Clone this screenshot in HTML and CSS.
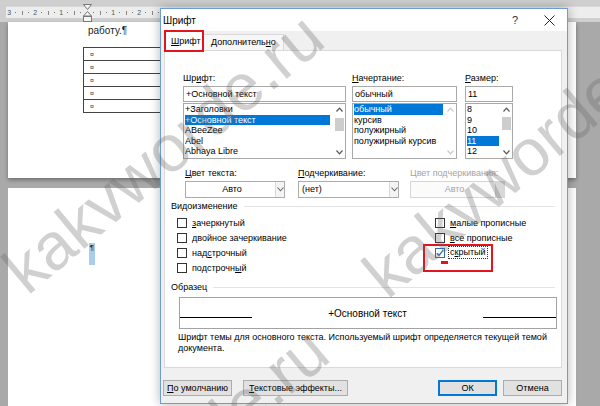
FILE: index.html
```html
<!DOCTYPE html>
<html lang="ru">
<head>
  <meta charset="UTF-8" />
  <title>Шрифт</title>
  <link rel="stylesheet" href="styles.css">
</head>
<body>
  <div class="screen">
    <div class="word">
      <div class="ruler">
        <div class="ruler-strip">
          <span class="rc">3</span><span class="rc dot"></span><span class="rc tick"></span><span class="rc dot"></span>
          <span class="rc">2</span><span class="rc dot"></span><span class="rc tick"></span><span class="rc dot"></span>
          <span class="rc">1</span><span class="rc dot"></span><span class="rc tick"></span><span class="rc dot"></span>
          <span class="rc indent">
            <svg width="9" height="18" viewBox="0 0 9 18"><path d="M0.5 0.5h8L4.5 5.5z M4.5 7.5l4 4.5h-8z" fill="#f6f6f6" stroke="#777"/><rect x="0.5" y="12.5" width="8" height="5" fill="#f6f6f6" stroke="#777"/></svg>
          </span>
          <span class="rc dot"></span><span class="rc tick"></span><span class="rc dot"></span>
          <span class="rc">1</span><span class="rc dot"></span><span class="rc tick"></span><span class="rc dot"></span>
          <span class="rc">2</span><span class="rc dot"></span><span class="rc tick"></span><span class="rc dot"></span>
          <span class="rc">3</span>
        </div>
      </div>

      <div class="page page-top">
        <p class="para">работу.¶</p>
        <table class="tbl">
          <tr><td>¤</td></tr>
          <tr><td>¤</td></tr>
          <tr><td>¤</td></tr>
          <tr><td>¤</td></tr>
          <tr><td>¤</td></tr>
        </table>
      </div>
      <div class="page page-bottom">
        <span class="caret-sel">¶</span>
      </div>
    </div>

    <div class="dialog">
      <div class="titlebar">
        <span class="title">Шрифт</span>
        <span class="help">?</span>
        <svg class="close" width="11" height="11" viewBox="0 0 11 11"><path d="M0.5 0.5L10.5 10.5M10.5 0.5L0.5 10.5" stroke="#222" stroke-width="1"/></svg>
      </div>

      <div class="tabs">
        <div class="tab tab-active"><u>Ш</u>рифт</div>
        <div class="tab">Дополнитель<u>н</u>о</div>
      </div>

      <div class="panel">
        <div class="font-row">
          <div class="col col-font">
            <div class="lbl">Шр<u>и</u>фт:</div>
            <div class="field">+Основной текст</div>
            <div class="list">
              <div class="items">
                <div class="item">+Заголовки</div>
                <div class="item sel">+Основной текст</div>
                <div class="item">ABeeZee</div>
                <div class="item">Abel</div>
                <div class="item">Abhaya Libre</div>
              </div>
              <div class="sbar">
                <div class="sarrow"><svg width="7" height="5" viewBox="0 0 7 5"><path d="M0.5 4.5L3.5 1.2L6.5 4.5" fill="none" stroke="#555" stroke-width="1.2"/></svg></div>
                <div class="strack"><div class="thumb"></div></div>
                <div class="sarrow"><svg width="7" height="5" viewBox="0 0 7 5"><path d="M0.5 0.5L3.5 3.8L6.5 0.5" fill="none" stroke="#555" stroke-width="1.2"/></svg></div>
              </div>
            </div>
          </div>

          <div class="col col-style">
            <div class="lbl"><u>Н</u>ачертание:</div>
            <div class="field">обычный</div>
            <div class="list">
              <div class="items">
                <div class="item sel">обычный</div>
                <div class="item">курсив</div>
                <div class="item">полужирный</div>
                <div class="item">полужирный курсив</div>
              </div>
              <div class="sbar">
                <div class="sarrow"><svg width="7" height="5" viewBox="0 0 7 5"><path d="M0.5 4.5L3.5 1.2L6.5 4.5" fill="none" stroke="#c8c8c8" stroke-width="1.2"/></svg></div>
                <div class="strack"></div>
                <div class="sarrow"><svg width="7" height="5" viewBox="0 0 7 5"><path d="M0.5 0.5L3.5 3.8L6.5 0.5" fill="none" stroke="#c8c8c8" stroke-width="1.2"/></svg></div>
              </div>
            </div>
          </div>

          <div class="col col-size">
            <div class="lbl"><u>Р</u>азмер:</div>
            <div class="field">11</div>
            <div class="list">
              <div class="items">
                <div class="item">8</div>
                <div class="item">9</div>
                <div class="item">10</div>
                <div class="item sel">11</div>
                <div class="item">12</div>
              </div>
              <div class="sbar">
                <div class="sarrow"><svg width="7" height="5" viewBox="0 0 7 5"><path d="M0.5 4.5L3.5 1.2L6.5 4.5" fill="none" stroke="#555" stroke-width="1.2"/></svg></div>
                <div class="strack"><div class="thumb"></div></div>
                <div class="sarrow"><svg width="7" height="5" viewBox="0 0 7 5"><path d="M0.5 0.5L3.5 3.8L6.5 0.5" fill="none" stroke="#555" stroke-width="1.2"/></svg></div>
              </div>
            </div>
          </div>
        </div>

        <div class="color-row">
          <div class="ccol ccol-1">
            <div class="lbl"><u>Ц</u>вет текста:</div>
            <div class="combo">
              <span class="combo-text centered">Авто</span>
              <span class="combo-btn"><svg width="7" height="5" viewBox="0 0 7 5"><path d="M0.5 0.5L3.5 3.8L6.5 0.5" fill="none" stroke="#666" stroke-width="1.1"/></svg></span>
            </div>
          </div>
          <div class="ccol ccol-2">
            <div class="lbl"><u>П</u>одчеркивание:</div>
            <div class="combo">
              <span class="combo-text">(нет)</span>
              <span class="combo-btn"><svg width="7" height="5" viewBox="0 0 7 5"><path d="M0.5 0.5L3.5 3.8L6.5 0.5" fill="none" stroke="#666" stroke-width="1.1"/></svg></span>
            </div>
          </div>
          <div class="ccol ccol-3">
            <div class="lbl disabled">Цвет подчеркивания:</div>
            <div class="combo combo-off">
              <span class="combo-text centered">Авто</span>
              <span class="combo-btn"></span>
            </div>
          </div>
        </div>

        <div class="group-head">Видоизменение</div>
        <div class="checks">
          <div class="chk-col">
            <div class="chk"><span class="box"></span><span><u>з</u>ачеркнутый</span></div>
            <div class="chk"><span class="box"></span><span><u>д</u>войное зачеркивание</span></div>
            <div class="chk"><span class="box"></span><span>над<u>с</u>трочный</span></div>
            <div class="chk"><span class="box"></span><span>подстрочн<u>ы</u>й</span></div>
          </div>
          <div class="chk-col">
            <div class="chk"><span class="box"></span><span><u>м</u>алые прописные</span></div>
            <div class="chk"><span class="box"></span><span><u>в</u>се прописные</span></div>
            <div class="chk"><span class="box checked"><svg width="8" height="8" viewBox="0 0 8 8"><path d="M0.8 4.2L3 6.4L7.2 1.2" fill="none" stroke="#2b6cb8" stroke-width="1.3"/></svg></span><span class="focus">с<u>к</u>рытый</span></div>
          </div>
          <div class="mark-box"></div>
          <div class="mark-dash"></div>
        </div>

        <div class="group-head head-sample">Образец</div>
        <div class="sample">
          <span class="ln ln-left"></span>
          <span class="sample-text">+Основной текст</span>
          <span class="ln ln-right"></span>
        </div>
        <p class="desc">Шрифт темы для основного текста. Используемый шрифт определяется текущей темой документа.</p>
      </div>

      <div class="footer">
        <div class="btn-group">
          <div class="btn btn-default"><u>П</u>о умолчанию</div>
          <div class="btn btn-effects"><u>Т</u>екстовые эффекты...</div>
        </div>
        <div class="btn-group right">
          <div class="btn btn-ok">ОК</div>
          <div class="btn btn-cancel">Отмена</div>
        </div>
      </div>
    </div>

    <div class="wm wm1">kakvworde.ru</div>
    <div class="wm wm2">kakvworde.ru</div>
    <div class="wm wm3">kakvworde.ru</div>
  </div>
</body>
</html>
```

FILE: styles.css
```css
* {
  box-sizing: border-box;
}

body {
  margin: 0;
  font-family: "Liberation Sans", Arial, sans-serif;
}

.screen {
  position: relative;
  width: 600px;
  height: 406px;
  overflow: hidden;
  background: #a9a9a9;
}

/* word document behind the dialog */
.ruler {
  height: 22px;
  background: #cfcfcf;
  padding: 6px 0 0 6px;
}

.ruler-strip {
  height: 12px;
  background: #ededed;
  border-top: 1px solid #d8d8d8;
  display: flex;
  align-items: center;
  font-size: 7px;
  color: #555;
}

.rc {
  width: 6.5px;
  flex: none;
  display: flex;
  justify-content: center;
  align-items: center;
  height: 100%;
}

.rc.dot::after {
  content: "";
  width: 1px;
  height: 1px;
  background: #777;
}

.rc.tick::after {
  content: "";
  width: 1px;
  height: 4px;
  background: #888;
}

.rc.indent {
  position: relative;
}

.rc.indent svg {
  position: absolute;
  left: -1px;
  top: -3px;
}

.page {
  background: #fff;
  width: 568px;
  margin-left: 8px;
}

.page-top {
  height: 156px;
  padding: 3px 0 0 75px;
  margin-bottom: 10px;
  box-shadow: 0 2px 4px rgba(0, 0, 0, 0.35);
}

.para {
  margin: 0 0 10px 5px;
  font-size: 10px;
  line-height: 12px;
  color: #222;
}

.tbl {
  border-collapse: collapse;
  width: 220px;
}

.tbl td {
  height: 13px;
  border: 1px solid #444;
  padding: 0 0 0 6px;
  font-size: 7px;
  line-height: 11px;
  color: #333;
}

.page-bottom {
  height: 230px;
  padding: 55px 0 0 81px;
}

.caret-sel {
  display: block;
  width: 6px;
  height: 22px;
  background: #a9cdef;
  font-size: 8px;
  line-height: 9px;
  color: #223;
  text-align: center;
}

/* font dialog */
.dialog {
  position: absolute;
  left: 160px;
  top: 8px;
  width: 408px;
  height: 396px;
  background: #f0f0f0;
  border: 1px solid #6d9bd3;
  box-shadow: 0 0 10px rgba(0, 0, 0, 0.3);
  font-size: 9px;
  color: #000;
}

.titlebar {
  height: 22px;
  background: #fff;
  display: flex;
  align-items: center;
  padding-left: 2px;
}

.title {
  font-size: 10px;
}

.help {
  margin-left: auto;
  font-size: 11px;
  color: #333;
}

.close {
  margin: 0 12px 0 26px;
}

.tabs {
  height: 19px;
  display: flex;
  align-items: flex-end;
  padding-left: 4px;
}

.tab {
  height: 16px;
  border: 1px solid #d9d9d9;
  border-bottom: none;
  background: #f7f7f7;
  padding: 0 7px;
  line-height: 15px;
}

.tab-active {
  height: 20px;
  width: 38px;
  margin-bottom: -1px;
  background: #fff;
  position: relative;
  z-index: 1;
  padding: 2px 0 0 5px;
  outline: 2px solid #e2141c;
  outline-offset: -1px;
}

.panel {
  margin-left: 3px;
  width: 398px;
  height: 318px;
  background: #fff;
  border: 1px solid #d9d9d9;
  padding: 21px 6px 0 6px;
}

.lbl {
  height: 12px;
  line-height: 12px;
  margin-bottom: 2px;
  white-space: nowrap;
}

.lbl.disabled {
  color: #a3a3a3;
}

.font-row {
  display: flex;
  margin-left: 12px;
}

.col-font {
  width: 163px;
  margin-right: 6px;
}

.col-style {
  width: 105px;
  margin-right: 8px;
}

.col-size {
  width: 48px;
}

.field {
  height: 16px;
  border: 1px solid #a9a9a9;
  padding-left: 2px;
  line-height: 14px;
}

.list {
  margin-top: 1px;
  height: 56px;
  border: 1px solid #a9a9a9;
  display: flex;
}

.items {
  flex: 1;
  overflow: hidden;
}

.item {
  height: 10.5px;
  line-height: 10.5px;
  padding-left: 1px;
  white-space: nowrap;
}

.item.sel {
  background: #0078d7;
  color: #fff;
  margin: 0 1px 0 1px;
  padding-left: 0;
}

.col-font .item.sel {
  margin-right: 3px;
}

.sbar {
  width: 12px;
  display: flex;
  flex-direction: column;
}

.sarrow {
  height: 11px;
  display: flex;
  align-items: center;
  justify-content: center;
}

.strack {
  flex: 1;
}

.thumb {
  width: 9px;
  height: 13px;
  margin: 3px auto 0;
  background: #cdcdcd;
}

.col-size .thumb {
  margin-top: 2px;
}

.color-row {
  display: flex;
  margin: 8px 0 0 14px;
}

.ccol-1 {
  width: 100px;
  margin-right: 13px;
}

.ccol-2 {
  width: 101px;
  margin-right: 11px;
}

.ccol-3 {
  width: 95px;
}

.combo {
  height: 17px;
  border: 1px solid #acacac;
  background: #fff;
  display: flex;
}

.combo-text {
  flex: 1;
  line-height: 15px;
  padding-left: 3px;
}

.combo-text.centered {
  text-align: center;
}

.combo-btn {
  width: 9px;
  border-left: 1px solid #d9d9d9;
  background: #f4f4f4;
  display: flex;
  align-items: center;
  justify-content: center;
}

.combo-off {
  border-color: #d6d6d6;
  background: #fbfbfb;
  color: #a3a3a3;
}

.combo-off .combo-btn {
  background: #d8d8d8;
  border-left-color: #cfcfcf;
}

.group-head {
  margin-top: 2px;
  height: 12px;
  line-height: 12px;
  display: flex;
  align-items: center;
}

.group-head::after {
  content: "";
  flex: 1;
  height: 1px;
  background: #e3e3e3;
  margin-left: 6px;
}

.checks {
  position: relative;
  margin-top: 3px;
  padding-left: 6px;
  display: grid;
  grid-template-columns: 258px 1fr;
}

.chk {
  height: 15px;
  display: flex;
  align-items: center;
  white-space: nowrap;
}

.box {
  width: 10px;
  height: 10px;
  border: 1px solid #333;
  background: #fff;
  margin-right: 5px;
  flex: none;
  display: flex;
  align-items: center;
  justify-content: center;
}

.box.checked {
  border-color: #2b6cb8;
}

.focus {
  outline: 1px dotted #333;
  padding: 0 1px;
  line-height: 11px;
  margin-left: -1px;
}

.mark-box {
  position: absolute;
  left: 252px;
  top: 29px;
  width: 70px;
  height: 28px;
  border: 2px solid #e2141c;
}

.mark-dash {
  position: absolute;
  left: 270px;
  top: 46px;
  width: 7px;
  height: 3px;
  background: #e2141c;
}

.head-sample {
  margin-top: 6px;
}

.sample {
  margin: 4px 0 0 8px;
  width: 378px;
  height: 32px;
  border: 1px solid #a3a3a3;
  display: flex;
  align-items: center;
}

.ln {
  height: 1px;
  background: #000;
  margin-top: 8px;
}

.ln-left {
  width: 72px;
}

.ln-right {
  width: 73px;
}

.sample-text {
  flex: 1;
  text-align: center;
  font-size: 10px;
}

.desc {
  margin: 3px 0 0 7px;
  line-height: 11px;
  width: 378px;
}

.footer {
  display: flex;
  justify-content: space-between;
  padding: 12px 5px 0 2px;
}

.btn-group {
  display: flex;
  gap: 11px;
}

.btn-group.right {
  gap: 6px;
}

.btn {
  height: 16px;
  border: 1px solid #adadad;
  background: #e1e1e1;
  text-align: center;
  line-height: 14px;
  white-space: nowrap;
}

.btn-default {
  width: 69px;
}

.btn-effects {
  width: 105px;
}

.btn-ok,
.btn-cancel {
  width: 59px;
}

.btn-ok {
  border-color: #0078d7;
  box-shadow: inset 0 0 0 1px #0078d7;
}

/* site watermark */
.wm {
  position: absolute;
  font-size: 66px;
  line-height: 66px;
  white-space: nowrap;
  color: rgba(100, 100, 100, 0.3);
  transform: rotate(-40deg);
  transform-origin: 0 100%;
  pointer-events: none;
}

.wm1 {
  left: 34px;
  top: 238px;
}

.wm2 {
  left: 394px;
  top: 242px;
}

.wm3 {
  left: 39px;
  top: 553px;
}
```
